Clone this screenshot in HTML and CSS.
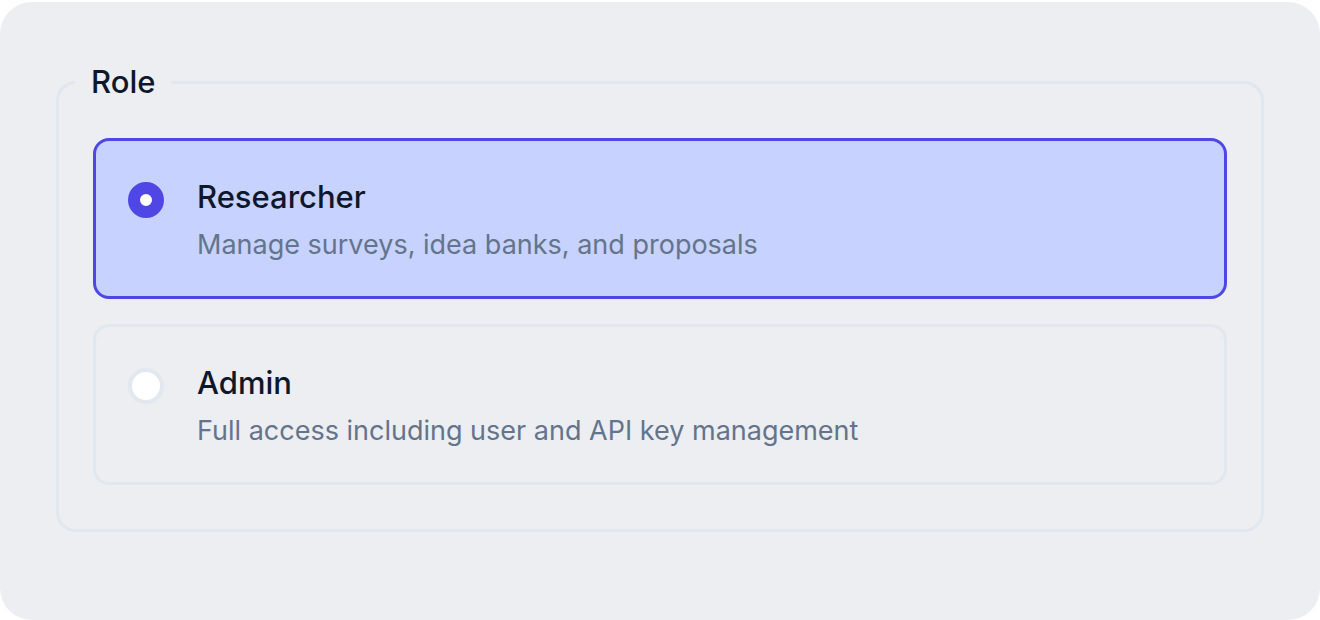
FILE: index.html
```html
<!DOCTYPE html>
<html lang="en">
<head>
  <meta charset="UTF-8">
  <meta name="viewport" content="width=device-width, initial-scale=1.0">
  <title>Role</title>
  <link rel="stylesheet" href="styles.css">
</head>
<body>
  <div class="panel">
    <fieldset class="role-group">
      <legend>Role</legend>

      <div class="options">
        <label class="option selected">
          <input type="radio" name="role" value="researcher" checked>
          <span class="radio"></span>
          <span class="option-text">
            <span class="option-title">Researcher</span>
            <span class="option-desc">Manage surveys, idea banks, and proposals</span>
          </span>
        </label>

        <label class="option">
          <input type="radio" name="role" value="admin">
          <span class="radio"></span>
          <span class="option-text">
            <span class="option-title">Admin</span>
            <span class="option-desc">Full access including user and API key management</span>
          </span>
        </label>
      </div>
    </fieldset>
  </div>
</body>
</html>
```

FILE: styles.css
```css
* {
  box-sizing: border-box;
}

body {
  margin: 0;
  background-color: #fff;
  font-family: Inter, "Noto Sans", sans-serif;
  color: #0f172a;
}

.panel {
  margin-top: 2px;
  height: 618px;
  background-color: #eceef2;
  border-radius: 32px;
  padding: 60px 56px 0;
}

.role-group {
  margin: 0;
  border: 3px solid #e1e7ef;
  border-radius: 20px;
  padding: 36px 34px 44px;
}

.role-group legend {
  margin-left: -18px;
  padding: 0 16px;
  font-size: 31px;
  line-height: 40px;
  font-weight: 500;
  color: #0f172a;
}

.options {
  display: flex;
  flex-direction: column;
  gap: 25px;
}

.option {
  display: flex;
  align-items: flex-start;
  gap: 33px;
  padding: 36px 32px 34px;
  border: 3px solid #e1e7ef;
  border-radius: 16px;
  cursor: pointer;
}

.option.selected {
  background-color: #c7d2fe;
  border-color: #4f46e5;
}

.option input {
  display: none;
}

.radio {
  flex: none;
  width: 36px;
  height: 36px;
  margin-top: 5px;
  border-radius: 50%;
  background-color: #fff;
  border: 4px solid #e2e8f0;
}

.option.selected .radio {
  border: 12px solid #4f46e5;
}

.option-text {
  display: flex;
  flex-direction: column;
  gap: 11px;
}

.option-title {
  font-size: 31px;
  line-height: 40px;
  font-weight: 500;
  color: #0f172a;
}

.option-desc {
  font-size: 27px;
  line-height: 34px;
  color: #64748b;
}
```
